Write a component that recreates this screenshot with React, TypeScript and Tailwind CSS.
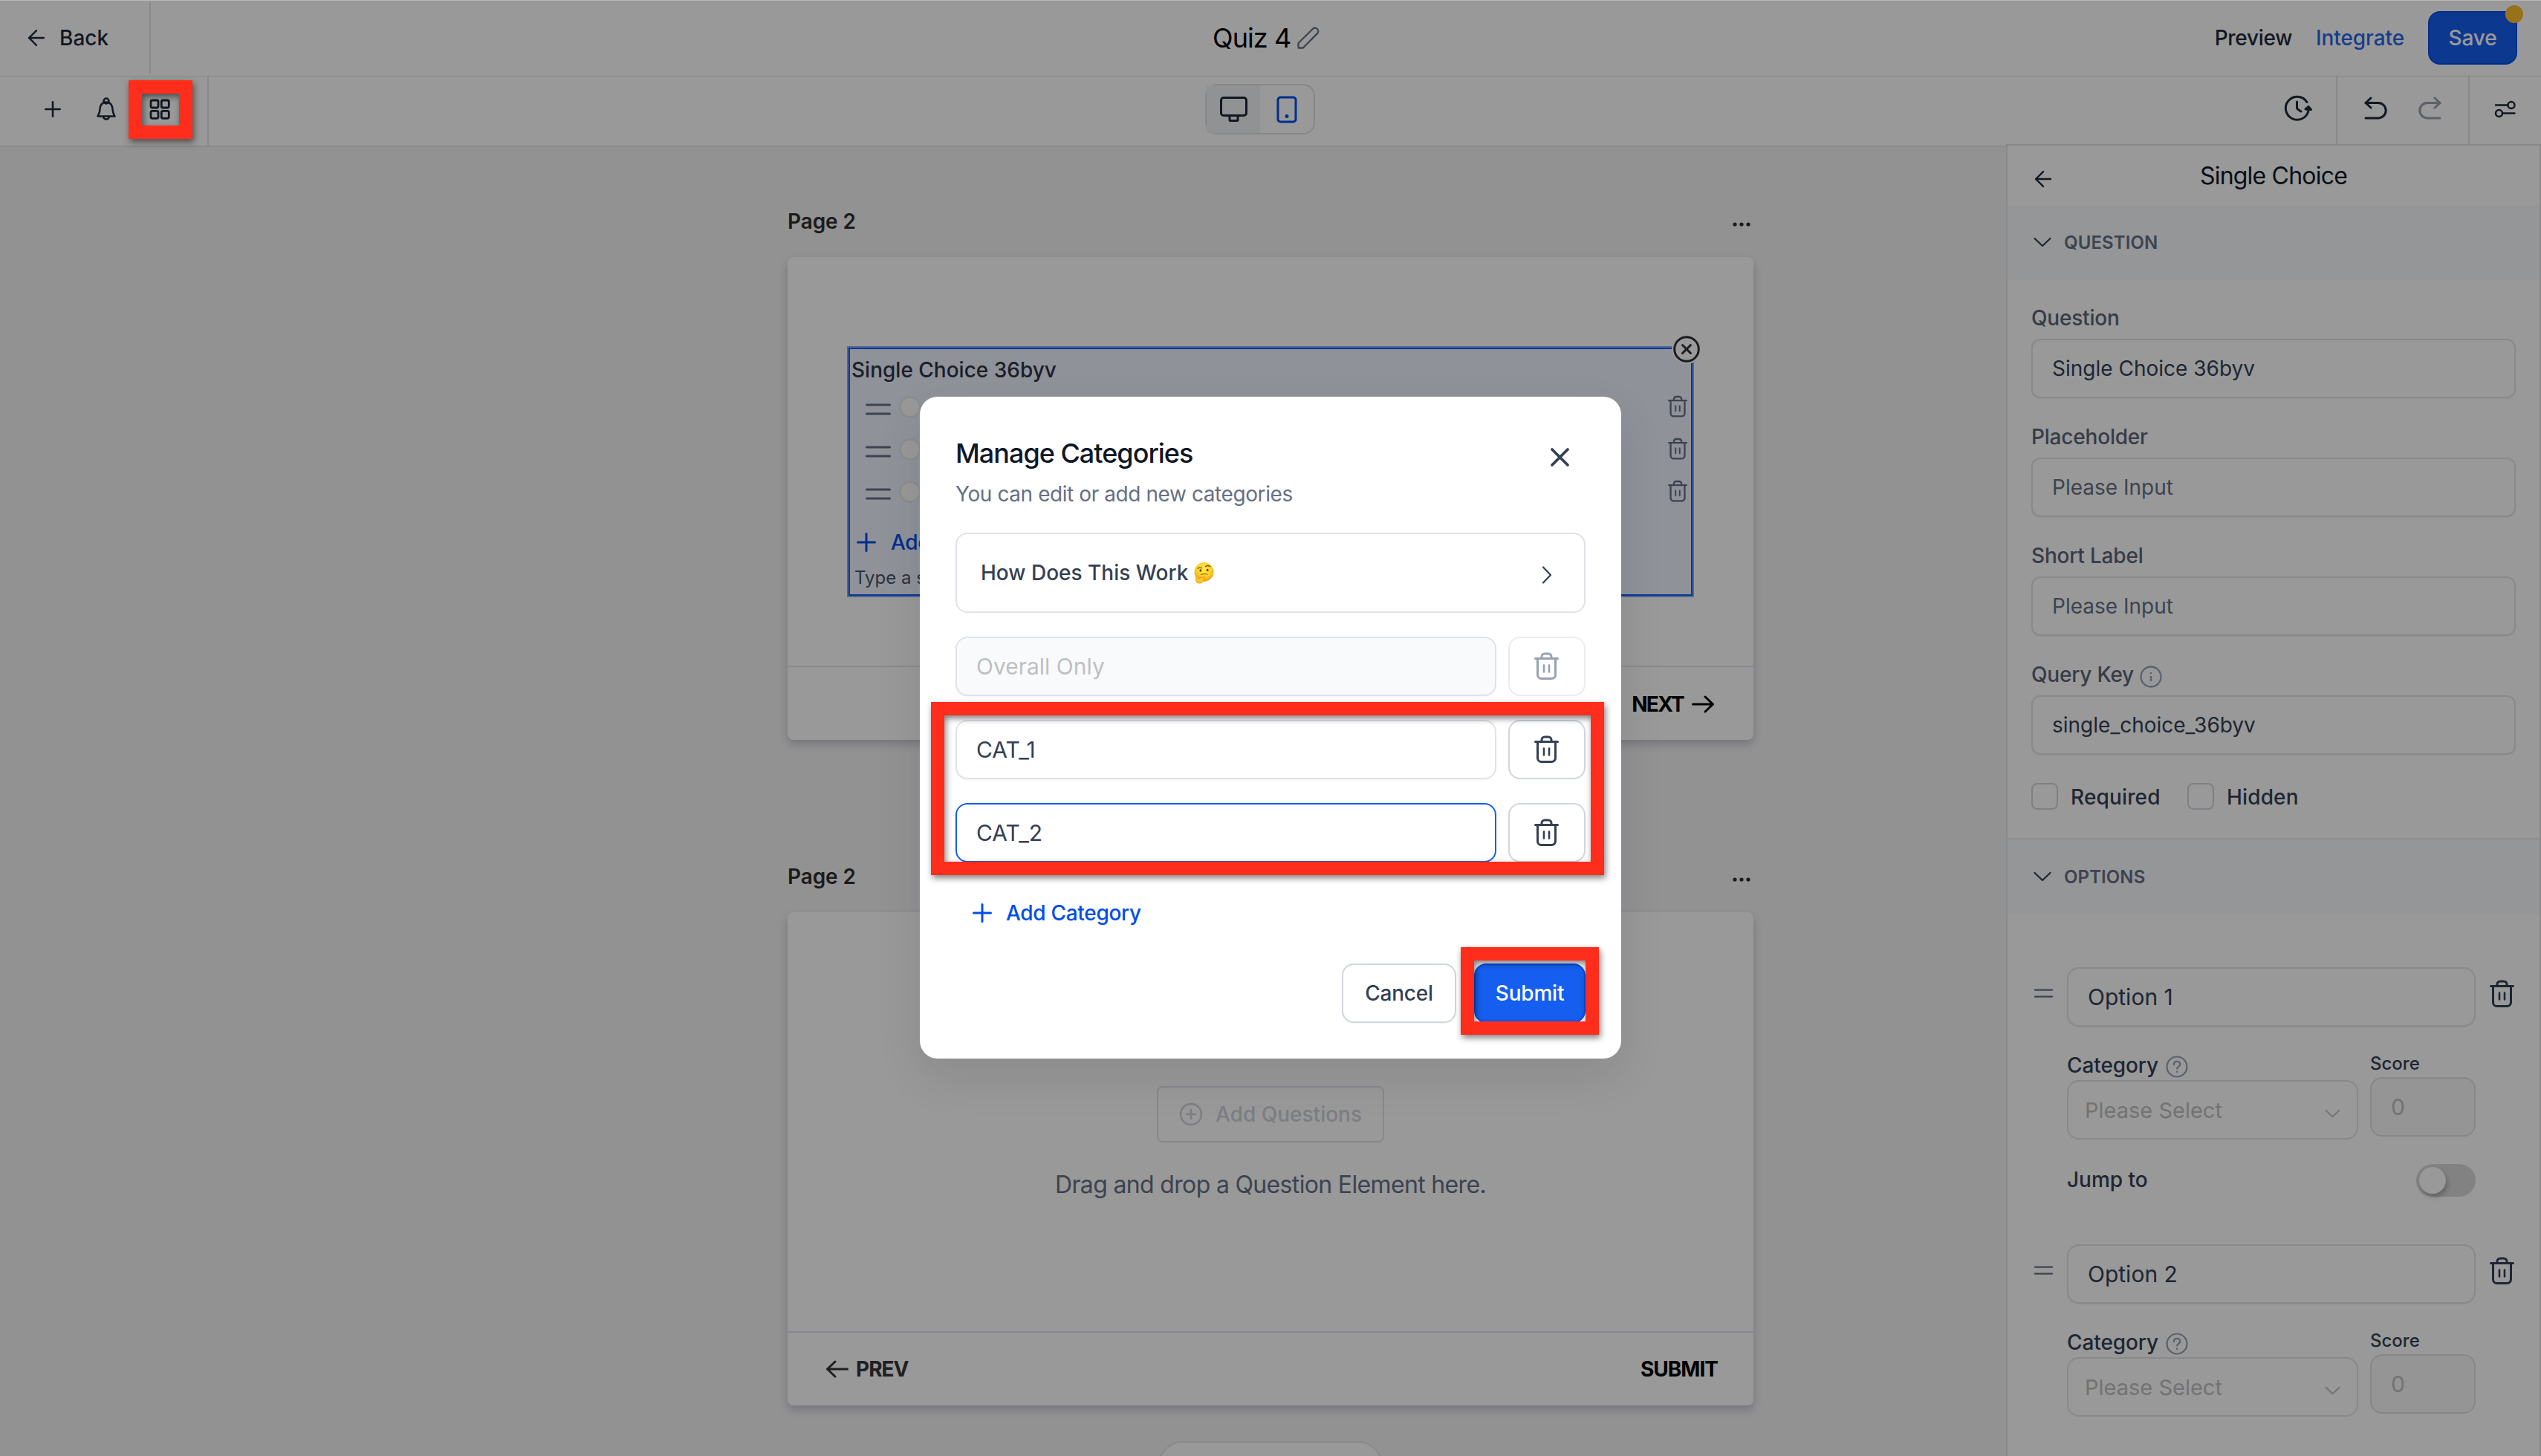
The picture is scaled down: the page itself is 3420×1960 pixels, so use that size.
import React from "react";
import { ArrowLeft } from "lucide-react";

type IconProps = { className?: string };

const TrashIcon = ({ className }: IconProps) => (
  <svg
    className={className}
    viewBox="0 0 33 37"
    fill="none"
    stroke="currentColor"
    strokeWidth="3"
    strokeLinecap="round"
    strokeLinejoin="round"
  >
    <path d="M1.5 8.5h30" />
    <path d="M10 8.5V6a4 4 0 0 1 4-4h5a4 4 0 0 1 4 4v2.500" />
    <path d="M4.500 8.500v22a5 5 0 0 0 5 5h14a5 5 0 0 0 5-5v-22" />
    <path d="M13 17.500v9M20 17.500v9" strokeWidth="2.600" />
  </svg>
);

const PlusIcon = ({ className }: IconProps) => (
  <svg
    className={className}
    viewBox="0 0 26 26"
    fill="none"
    stroke="currentColor"
    strokeWidth="3"
    strokeLinecap="round"
  >
    <path d="M13 1.500v23M1.500 13h23" />
  </svg>
);

const ChevronIcon = ({ className }: IconProps) => (
  <svg
    className={className}
    viewBox="0 0 24 14"
    fill="none"
    stroke="currentColor"
    strokeWidth="2.200"
    strokeLinecap="round"
    strokeLinejoin="round"
  >
    <path d="M1.500 2L12 12 22.500 2" />
  </svg>
);

const HandleIcon = ({ className }: IconProps) => (
  <svg
    className={className}
    viewBox="0 0 34 16"
    fill="none"
    stroke="currentColor"
    strokeWidth="3"
    strokeLinecap="round"
  >
    <path d="M1.500 2h31M1.500 14h31" />
  </svg>
);

const LongArrow = ({ className }: IconProps) => (
  <svg
    className={className}
    viewBox="0 0 30 24"
    fill="none"
    stroke="currentColor"
    strokeWidth="3"
    strokeLinecap="round"
    strokeLinejoin="round"
  >
    <path d="M1.500 12h27M18 2l10.500 10L18 22" />
  </svg>
);

const DotsIcon = () => (
  <svg className="h-[6px] w-[24px]" viewBox="0 0 24 6" fill="currentColor">
    <circle cx="3" cy="3" r="2.600" />
    <circle cx="12" cy="3" r="2.600" />
    <circle cx="21" cy="3" r="2.600" />
  </svg>
);

const UndoIcon = ({ className }: IconProps) => (
  <svg
    className={className}
    viewBox="0 0 31 31"
    fill="none"
    stroke="currentColor"
    strokeWidth="3"
    strokeLinecap="round"
    strokeLinejoin="round"
  >
    <path d="M9 2L2 8.500 9 15" />
    <path d="M2 8.500h17a10.200 10.200 0 0 1 0 20.400H2" />
  </svg>
);

const ThinkingFace = () => (
  <svg className="h-[30px] w-[29px]" viewBox="0 0 28 28" fill="none">
    <defs>
      <radialGradient id="face" cx="0.5" cy="0.35" r="0.65">
        <stop offset="0" stopColor="#ffe94a" />
        <stop offset="0.6" stopColor="#fdcf2a" />
        <stop offset="1" stopColor="#f09a12" />
      </radialGradient>
    </defs>
    <circle cx="14" cy="13" r="12.500" fill="url(#face)" />
    <path
      d="M6 8.500q2.500-2 5-.500M16 6q3-2.300 6 0"
      stroke="#8a4b0c"
      strokeWidth="1.300"
      strokeLinecap="round"
    />
    <ellipse cx="9.500" cy="11" rx="1.300" ry="1.600" fill="#5b2f08" />
    <ellipse cx="18.500" cy="10.500" rx="1.300" ry="1.600" fill="#5b2f08" />
    <path
      d="M10.500 16.500q4-1.800 8-.400"
      stroke="#9a5a10"
      strokeWidth="1"
      strokeLinecap="round"
    />
    <path
      d="M4 18.500q1.800-1 2.200 1.200l.3 1.600 7.500-2q2.200 0 1 2l-2 1q1.600.6.600 2.200-1.600 3-5.600 3.200-4 0-4.600-3.600z"
      fill="#fdc52a"
      stroke="#e08c14"
      strokeWidth="0.700"
    />
  </svg>
);

const TopBar = () => (
  <header className="grid h-[103px] grid-cols-[1632px_1fr_auto] items-center border-b border-[#e5e5e5] bg-white pb-px">
    <div className="flex h-[96px] w-[203px] items-center border-r-2 border-[#e5e5e5] pl-[32px] text-[#1d2939]">
      <ArrowLeft size={34} strokeWidth={1.7} />
      <span className="ml-[14px] text-[28px] font-medium">Back</span>
    </div>
    <div className="flex items-center gap-[9px]">
      <span className="text-[36px] leading-none tracking-[-0.9px] text-black">
        Quiz 4
      </span>
      <svg
        className="h-[30px] w-[30px] text-[#667085]"
        viewBox="0 0 30 30"
        fill="none"
        stroke="currentColor"
        strokeWidth="2.300"
        strokeLinejoin="round"
      >
        <path d="M1.500 28.500v-6.500L21 2.700a4.400 4.400 0 0 1 6.200 6.200L7.800 28.500z" />
      </svg>
    </div>
    <div className="flex items-center gap-8 pr-8 text-[28px] font-medium tracking-[-0.1px]">
      <span className="tracking-[-0.3px] text-[#1d2939]">Preview</span>
      <span className="text-[#2766e8]">Integrate</span>
      <div className="relative flex h-[72px] w-[120px] items-center justify-center rounded-2xl border-2 border-[#004eeb] bg-[#155eef] text-white">
        Save
        <span className="absolute -top-[10px] -right-[10px] h-6 w-6 rounded-full bg-[#fdbf2d]" />
      </div>
    </div>
  </header>
);

const ToolBar = () => (
  <div className="grid h-[93px] grid-cols-[281px_1fr_274px] bg-white text-[#1d2939]">
    <div className="flex items-center border-r-2 border-[#e5e5e5] pb-[5px] pl-[60px]">
      <PlusIcon className="h-[22px] w-[22px]" />
      <svg
        className="ml-[48px] h-[32px] w-[26px]"
        viewBox="0 0 26 32"
        fill="none"
        stroke="currentColor"
        strokeWidth="2.500"
        strokeLinejoin="round"
      >
        <circle cx="13" cy="5" r="3.500" />
        <path d="M13 6.500c-5.500 0-8.500 4.500-8.500 9.500 0 4-1 6-3 9.500h23c-2-3.500-3-5.500-3-9.500 0-5-3-9.500-8.500-9.500z" />
        <path d="M9 25.500a4 4 0 0 0 8 0" />
      </svg>
      <svg
        className="ml-[45px] h-[28px] w-[28px]"
        viewBox="0 0 28 28"
        fill="none"
        stroke="currentColor"
        strokeWidth="2.800"
      >
        <rect x="2" y="2" width="10" height="10" rx="2" />
        <rect x="16.300" y="2" width="10" height="10" rx="2" />
        <rect x="2" y="16.300" width="10" height="10" rx="2" />
        <rect x="16.300" y="16.300" width="10" height="10" rx="2" />
      </svg>
    </div>
    <div className="flex justify-between border-r-2 border-[#e5e5e5] pl-[1341px]">
      <div className="mt-[10px] flex h-[68px] w-[148px] rounded-2xl border-2 border-[#e0e1e2]">
        <div className="flex w-[72px] items-center justify-center bg-[#f2f4f7]">
          <svg
            className="h-[35px] w-[37px]"
            viewBox="0 0 37 35"
            fill="none"
            stroke="currentColor"
            strokeWidth="3"
          >
            <rect x="1.500" y="1.500" width="34" height="24" rx="3.500" />
            <path d="M13 26v5.500q0 1 1 1h9q1 0 1-1V26" />
          </svg>
        </div>
        <div className="flex w-[72px] items-center justify-center text-[#004eeb]">
          <svg
            className="h-[37px] w-[28px]"
            viewBox="0 0 28 37"
            fill="none"
            stroke="currentColor"
            strokeWidth="3"
          >
            <rect x="2" y="2" width="24" height="33" rx="3.500" />
            <circle cx="14" cy="27.500" r="2.500" fill="currentColor" stroke="none" />
          </svg>
        </div>
      </div>
      <svg
        className="mt-[25px] mr-[32px] h-[36px] w-[38px]"
        viewBox="0 0 38 36"
        fill="none"
        stroke="currentColor"
        strokeWidth="3"
        strokeLinecap="round"
      >
        <path d="M31 9.500A15.500 15.500 0 1 0 33 21" />
        <path d="M17.500 9v8q0 1.500 1.300 2.300l4.200 2.700" />
        <path d="M29 19l4-3.500 3.500 4z" fill="currentColor" strokeLinejoin="round" />
      </svg>
    </div>
    <div className="flex">
      <div className="flex w-[178px] justify-between border-r-2 border-[#e5e5e5] px-[36px] pt-[27px]">
        <UndoIcon className="h-[31px] w-[31px]" />
        <UndoIcon className="h-[31px] w-[31px] -scale-x-100 text-[#9aa1aa]" />
      </div>
      <svg
        className="mt-[32px] ml-[33px] h-[24px] w-[29px]"
        viewBox="0 0 29 24"
        fill="none"
        stroke="currentColor"
        strokeWidth="2.500"
        strokeLinecap="round"
      >
        <circle cx="23" cy="6.500" r="4.500" />
        <circle cx="6.500" cy="17.500" r="4.500" />
        <path d="M2 6.500h16M12 17.500h15.500" />
      </svg>
    </div>
  </div>
);

const PageHeading = () => (
  <div className="flex h-10 items-center justify-between pr-[4px] text-[28px] leading-10 font-semibold text-[#2e2e2e]">
    <span className="pt-[2px] tracking-[-0.1px]">Page 2</span>
    <span className="pt-[10px]">
      <DotsIcon />
    </span>
  </div>
);

const SelectedQuestion = () => (
  <div className="relative h-[338px] w-[1140px] border-2 border-[#84adff]">
    <div className="h-full border-2 border-[#155eef] bg-[#eff4ff] pt-[8px]">
      <div className="pl-[2px] text-[28px] leading-10 font-medium text-[#2f3346]">
        Single Choice 36byv
      </div>
      <div className="pt-[4px]">
        {[1, 2, 3].map((row) => (
          <div key={row} className="flex h-[57px] items-center pr-[5px] pl-[21px]">
            <HandleIcon className="h-[16px] w-[34px] text-[#667085]" />
            <span className="mt-[-5px] ml-[11px] h-[30px] w-[30px] rounded-full border-[3px] border-[#e8ecee] bg-white" />
            <TrashIcon className="mb-[7px] ml-auto h-[30px] w-[26px] text-[#667085]" />
          </div>
        ))}
      </div>
      <div className="mt-[12px] flex h-[50px] items-center gap-[20px] pl-[9px] text-[28px] font-medium tracking-[-0.4px] text-[#004eeb]">
        <PlusIcon className="h-[26px] w-[26px]" />
        Add Option
      </div>
      <div className="mt-[8px] pl-[6px] text-[24px] leading-[30px] text-[#475467]">
        Type a short hint
      </div>
    </div>
    <div className="absolute -top-[18px] -right-[12px] flex h-[40px] w-[40px] items-center justify-center rounded-full bg-white">
      <svg
        className="h-[36px] w-[36px] text-[#2c3034]"
        viewBox="0 0 36 36"
        fill="none"
        stroke="currentColor"
        strokeWidth="3"
        strokeLinecap="round"
      >
        <circle cx="18" cy="18" r="16.300" />
        <path d="M12.500 12.500l11 11M23.500 12.500l-11 11" />
      </svg>
    </div>
  </div>
);

const Canvas = () => (
  <main className="h-[1764px] flex-1 border-t-2 border-[#e5e5e5] bg-[#f3f3f6] pt-[79px] pl-[1060px]">
    <div className="w-[1300px]">
      <PageHeading />
      <div className="mt-[29px] overflow-hidden rounded-lg bg-white shadow-[0_6px_12px_rgba(16,24,40,0.2)]">
        <div className="h-[550px] pt-[120px] pl-[80px]">
          <SelectedQuestion />
        </div>
        <div className="flex h-[100px] items-center justify-end gap-[11px] border-t-2 border-[#e4e7ec] pt-px pr-[53px] text-[28px] font-bold tracking-[-1.7px] text-black">
          NEXT
          <LongArrow className="h-[24px] w-[30px]" />
        </div>
      </div>

      <div className="pt-[163px]">
        <PageHeading />
      </div>
      <div className="mt-[29px] overflow-hidden rounded-lg bg-white shadow-[0_6px_12px_rgba(16,24,40,0.2)]">
        <div className="flex h-[564px] flex-col items-center pt-[234px]">
          <div className="flex h-[76px] w-[306px] items-center gap-[17px] rounded-lg border-2 border-[#e0e3e8] pl-[28px] text-[28px] font-medium text-[#cfd3db]">
            <svg
              className="h-[32px] w-[32px]"
              viewBox="0 0 32 32"
              fill="none"
              stroke="currentColor"
              strokeWidth="2.500"
              strokeLinecap="round"
            >
              <circle cx="16" cy="16" r="14" />
              <path d="M16 10v12M10 16h12" />
            </svg>
            Add Questions
          </div>
          <p className="mt-[37px] text-[32px] leading-[40px] tracking-[-0.66px] text-[#667085]">
            Drag and drop a Question Element here.
          </p>
        </div>
        <div className="flex h-[100px] items-center justify-between border-t-2 border-[#dfe3e8] pr-[48px] pl-[52px] text-[28px] font-bold tracking-[-1px] text-black">
          <span className="flex items-center gap-[10px] text-[#363636]">
            <LongArrow className="h-[24px] w-[30px] rotate-180" />
            PREV
          </span>
          SUBMIT
        </div>
      </div>
      <div className="mx-auto mt-[48px] h-[80px] w-[302px] rounded-[33px] border-2 border-[#e3e5e8] bg-white" />
    </div>
  </main>
);

const SectionTitle = ({ title }: { title: string }) => (
  <div className="flex h-[100px] items-center gap-[17px] bg-[#f8fafc] pl-[35px] text-[24px] font-semibold tracking-[0.1px] text-[#667085]">
    <ChevronIcon className="h-[14px] w-[24px] text-[#344054]" />
    <span className="pt-[2px]">{title}</span>
  </div>
);

const fields = [
  { label: "Question", value: "Single Choice 36byv", filled: true },
  { label: "Placeholder", value: "Please Input", filled: false },
  { label: "Short Label", value: "Please Input", filled: false },
  { label: "Query Key", value: "single_choice_36byv", filled: true, info: true },
];

const InfoIcon = () => (
  <svg
    className="mt-[5px] h-[30px] w-[30px] text-[#98a2b3]"
    viewBox="0 0 30 30"
    fill="none"
    stroke="currentColor"
    strokeWidth="2.300"
  >
    <circle cx="15" cy="15" r="13.500" />
    <path d="M15 14v7M15 9v2.300" />
  </svg>
);

const HelpIcon = () => (
  <svg
    className="mt-[4px] h-[30px] w-[30px] text-[#98a2b3]"
    viewBox="0 0 30 30"
    fill="none"
    stroke="currentColor"
    strokeWidth="2.200"
    strokeLinecap="round"
  >
    <circle cx="15" cy="15" r="13.500" />
    <path d="M10.800 12.200c0-6 8.600-5.500 8.600-.6 0 3-4.300 3-4.300 6" />
    <path d="M15.100 21.500v.4" />
  </svg>
);

const OptionEditor = ({ name, jump }: { name: string; jump: boolean }) => (
  <div className="flex h-[309px] pl-[35px]">
    <HandleIcon className="mt-[29px] h-[12px] w-[27px] text-[#667085]" />
    <div className="ml-[18px] w-[550px]">
      <div className="flex h-[80px] items-center rounded-2xl border-2 border-[#e3e4e6] pl-[26px] text-[30px] text-[#344054] shadow-xs">
        {name}
      </div>
      <div className="mt-8 flex gap-4">
        <div>
          <div className="flex h-10 items-center gap-[10px] text-[28px] font-medium tracking-[-0.1px] text-[#344054]">
            Category
            <HelpIcon />
          </div>
          <div className="flex h-[80px] w-[392px] items-center justify-between rounded-2xl border-2 border-[#e3e4e6] pt-[2px] pr-[22px] pl-[22px] text-[29px] text-[#c0c0c0]">
            Please Select
            <ChevronIcon className="mt-[8px] h-[12px] w-[21px]" />
          </div>
        </div>
        <div>
          <div className="flex h-9 items-center text-[24px] font-medium text-[#344054]">
            Score
          </div>
          <div className="flex h-[80px] w-[142px] items-center rounded-2xl border-2 border-[#e0e1e4] bg-[#f8f8f9] pl-[26px] text-[30px] text-[#c0c0c0]">
            0
          </div>
        </div>
      </div>
      {jump && (
        <div className="mt-[33px] flex h-11 items-center justify-between text-[28px] font-medium text-[#344054]">
          <span className="pb-[2px]">Jump to</span>
          <span className="flex h-11 w-20 items-center rounded-full bg-[#d9d9d9] pl-1">
            <span className="h-9 w-9 rounded-full bg-white shadow-[2px_4px_6px_rgba(0,0,0,0.25)]" />
          </span>
        </div>
      )}
    </div>
    <TrashIcon className="mt-[17px] ml-[19px] h-[37px] w-[33px] text-[#344054]" />
  </div>
);

const SettingsPanel = () => (
  <aside className="-mt-[2px] h-[1766px] w-[720px] overflow-hidden border-2 border-b-0 border-[#e5e5e5] bg-white">
    <div className="grid h-20 grid-cols-[80px_1fr_80px] items-center">
      <ArrowLeft size={34} strokeWidth={1.7} className="mt-[9px] ml-[31px] text-[#1d2939]" />
      <span className="pt-[2px] text-center text-[32px] tracking-[-0.8px] text-[#101828]">
        Single Choice
      </span>
    </div>
    <SectionTitle title="QUESTION" />
    <div className="px-8 pt-8 pb-[38px]">
      {fields.map((field) => (
        <div key={field.label} className="mb-8">
          <div className="flex h-10 items-center gap-[8px] text-[28px] font-medium tracking-[-0.2px] text-[#5a6579]">
            {field.label}
            {field.info && <InfoIcon />}
          </div>
          <div
            className={
              field.filled
                ? "mt-2 flex h-[80px] items-center rounded-xl border-2 border-[#e3e4e6] pl-[26px] text-[28px] text-[#344054] shadow-xs"
                : "mt-2 flex h-[80px] items-center rounded-xl border-2 border-[#e3e4e6] pl-[26px] text-[28px] text-[#667085] shadow-xs"
            }
          >
            {field.value}
          </div>
        </div>
      ))}
      <div className="mt-[38px] flex h-9 items-center text-[28px] font-medium text-[#344054]">
        <span className="h-9 w-9 rounded-lg border-2 border-[#d0d5dd]" />
        <span className="ml-[17px] w-[157px] pt-px tracking-[0.15px]">Required</span>
        <span className="h-9 w-9 rounded-lg border-2 border-[#d0d5dd]" />
        <span className="ml-[17px] pt-px tracking-[0.15px]">Hidden</span>
      </div>
    </div>
    <div className="border-t-2 border-[#eceef1]">
      <SectionTitle title="OPTIONS" />
    </div>
    <div className="flex flex-col gap-16 pt-[72px]">
      <OptionEditor name="Option 1" jump />
      <OptionEditor name="Option 2" jump={false} />
    </div>
  </aside>
);

const categories = [
  {
    name: "Overall Only",
    input: "border-[#e0e3e8] bg-[#f9fafc] text-[#bfbfbf]",
    button: "border-[#eaecf0] text-[#98a2b3]",
  },
  {
    name: "CAT_1",
    input: "border-[#e0e3e8] text-[#344054]",
    button: "border-[#d0d5dd] text-[#344054]",
  },
  {
    name: "CAT_2",
    input: "border-[#155eef] text-[#344054]",
    button: "border-[#d0d5dd] text-[#344054]",
  },
];

const ManageCategories = () => (
  <div className="h-[891px] w-[944px] rounded-3xl bg-white px-12 pt-[52px] shadow-[0_24px_60px_rgba(16,24,40,0.1)]">
    <div className="flex h-12 items-center justify-between pr-[21px]">
      <h2 className="text-[36px] leading-[48px] font-medium tracking-[-1px] text-[#101828]">
        Manage Categories
      </h2>
      <svg
        className="mt-[11px] h-[27px] w-[27px] text-[#344054]"
        viewBox="0 0 27 27"
        fill="none"
        stroke="currentColor"
        strokeWidth="3.800"
        strokeLinecap="round"
      >
        <path d="M3 3l21 21M24 3L3 24" />
      </svg>
    </div>
    <p className="mt-[11px] text-[28px] leading-10 tracking-[-0.42px] text-[#667085]">
      You can edit or add new categories
    </p>
    <div className="mt-8 flex h-[108px] items-center rounded-2xl border-2 border-[#dfe2e7] pr-[38px] pl-[32px] text-[28px] font-medium text-[#344054]">
      How Does This Work
      <span className="ml-[7px]">
        <ThinkingFace />
      </span>
      <ChevronIcon className="mt-[6px] ml-auto h-[14px] w-[24px] -rotate-90" />
    </div>
    <div className="mt-8 flex flex-col gap-8">
      {categories.map((category) => (
        <div key={category.name} className="flex gap-4">
          <div
            className={`flex h-[80px] w-[728px] items-center rounded-2xl border-2 pl-[26px] text-[30px] shadow-xs ${category.input}`}
          >
            {category.name}
          </div>
          <div
            className={`flex h-[80px] w-[104px] items-center justify-center rounded-2xl border-2 pr-px pb-px ${category.button}`}
          >
            <TrashIcon className="h-[37px] w-[33px]" />
          </div>
        </div>
      ))}
    </div>
    <div className="mt-[40px] flex h-14 items-center gap-[19px] pl-[23px] text-[28px] font-medium tracking-[-0.3px] text-[#004eeb]">
      <PlusIcon className="h-[26px] w-[26px]" />
      Add Category
    </div>
    <div className="mt-[40px] flex justify-end gap-6 text-[28px] font-medium tracking-[-0.2px]">
      <div className="flex h-[80px] w-[154px] items-center justify-center rounded-2xl border-2 border-[#d0d5dd] text-[#344054] shadow-xs">
        Cancel
      </div>
      <div className="flex h-[80px] w-[150px] items-center justify-center rounded-2xl border-2 border-[#004eeb] bg-[#155eef] text-white">
        Submit
      </div>
    </div>
  </div>
);

const App = () => {
  return (
    <div className="relative h-[1960px] w-[3420px] overflow-hidden bg-white font-['Inter',sans-serif]">
      <TopBar />
      <ToolBar />
      <div className="flex">
        <Canvas />
        <SettingsPanel />
      </div>

      {/* Modal */}
      <div className="absolute inset-x-0 top-px bottom-0 flex items-start justify-center bg-black/40 pt-[533px]">
        <ManageCategories />
      </div>
      <div className="absolute inset-x-0 top-0 h-px bg-[#b8b8b8]" />

      {/* Highlights */}
      <div className="absolute top-[108px] left-[173px] h-[79px] w-[86px] border-[18px] border-[#ff2d1c] drop-shadow-[2px_4px_4px_rgba(0,0,0,0.5)]" />
      <div className="absolute top-[945px] left-[1253px] h-[233px] w-[906px] border-[18px] border-[#ff2d1c] drop-shadow-[2px_4px_4px_rgba(0,0,0,0.5)]" />
      <div className="absolute top-[1275px] left-[1966px] h-[118px] w-[186px] border-[18px] border-[#ff2d1c] drop-shadow-[2px_4px_4px_rgba(0,0,0,0.5)]" />
    </div>
  );
};

export default App;
